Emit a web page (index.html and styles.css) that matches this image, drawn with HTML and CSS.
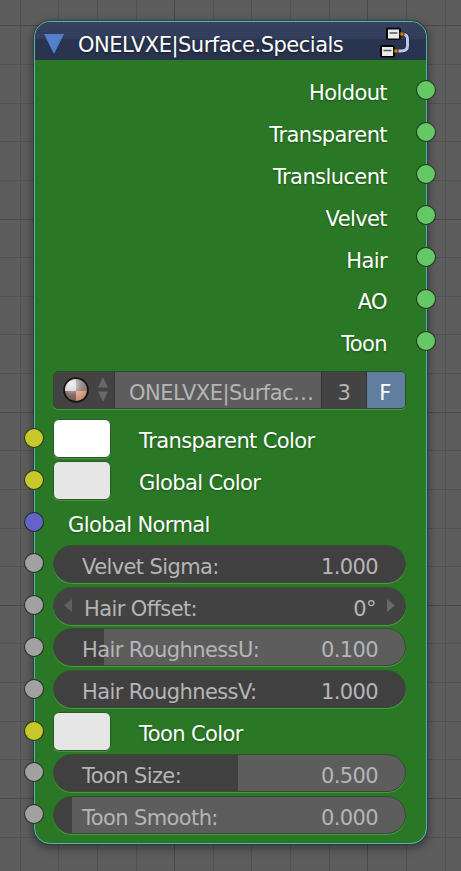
FILE: index.html
```html
<!DOCTYPE html>
<html lang="en">
<head>
<meta charset="utf-8">
<title>Node editor</title>
<link rel="stylesheet" href="styles.css">
</head>
<body>
<svg class="canvas-grid" width="461" height="871" shape-rendering="crispEdges" aria-hidden="true">
  <path class="minor" d="M20.5 0V871M58.5 0V871M97.5 0V871M136.5 0V871M213.5 0V871M251.5 0V871M290.5 0V871M329.5 0V871M406.5 0V871M445.5 0V871M0 64.5H461M0 103.5H461M0 141.5H461M0 180.5H461M0 257.5H461M0 296.5H461M0 334.5H461M0 373.5H461M0 450.5H461M0 489.5H461M0 528.5H461M0 566.5H461M0 643.5H461M0 682.5H461M0 721.5H461M0 759.5H461M0 837.5H461"/>
  <path class="major" d="M174.5 0V871M367.5 0V871M0 25.5H461M0 219.5H461M0 412.5H461M0 605.5H461M0 798.5H461"/>
</svg>
<main class="node">
  <header class="header">
    <svg class="collapse" width="20" height="20" viewBox="0 0 20 20"><path d="M0 0H20L10 20Z" fill="#5280cd"/></svg>
    <h1 class="title">ONELVXE|Surface.Specials</h1>
    <svg class="tree-icon" width="32" height="32" viewBox="0 0 32 32">
      <path d="M18 7H22Q27.500 7 27.500 12V19Q27.500 24 21 24H13" fill="none" stroke="#202a45" stroke-width="4.500"/>
      <path d="M18 7H22Q27.500 7 27.500 12V19Q27.500 24 21 24H13" fill="none" stroke="#b9c8ee" stroke-width="3"/>
      <rect x="6" y="0.500" width="15" height="12.500" rx="2" fill="#080808"/>
      <rect x="0" y="18" width="15" height="12.500" rx="2" fill="#080808"/>
      <rect x="8" y="2.500" width="11" height="9" fill="#eaeaea"/>
      <rect x="2" y="20" width="11" height="9" fill="#eaeaea"/>
      <path d="M9.500 6H17.500M3.500 23.500H11.500" stroke="#555" stroke-width="1.400"/>
      <circle cx="22" cy="7" r="2.200" fill="#c98417" stroke="#4a2b05"/>
      <circle cx="16" cy="24" r="2.200" fill="#c98417" stroke="#4a2b05"/>
    </svg>
  </header>
  <section class="outputs">
    <div class="row out">Holdout<i class="socket green"></i></div>
    <div class="row out">Transparent<i class="socket green"></i></div>
    <div class="row out">Translucent<i class="socket green"></i></div>
    <div class="row out">Velvet<i class="socket green"></i></div>
    <div class="row out">Hair<i class="socket green"></i></div>
    <div class="row out">AO<i class="socket green"></i></div>
    <div class="row out">Toon<i class="socket green"></i></div>
  </section>
  <section class="datablock">
    <div class="browse">
      <svg width="26" height="26" viewBox="0 0 26 26">
        <defs>
          <radialGradient id="gloss" cx=".32" cy=".25" r=".8"><stop offset="0" stop-color="#fff" stop-opacity=".75"/><stop offset=".6" stop-color="#fff" stop-opacity=".1"/><stop offset="1" stop-color="#000" stop-opacity=".15"/></radialGradient>
        </defs>
        <circle cx="13" cy="13" r="12.800" fill="#151212"/>
        <path d="M13 14H2A11 11 0 0 1 13 2Z" fill="#c9c9c9"/>
        <path d="M13 14V2A11 11 0 0 1 24 14Z" fill="#8b7d7b"/>
        <path d="M13 14H24A11 11 0 0 1 13 24Z" fill="#dda184"/>
        <path d="M13 14V24A11 11 0 0 1 2 14Z" fill="#755d5b"/>
        <circle cx="13" cy="13" r="11" fill="url(#gloss)"/>
      </svg>
      <svg class="updown" width="10" height="25" viewBox="0 0 10 25"><path d="M5 0L10 10.500H0ZM0 14.500H10L5 25Z" fill="#686868"/></svg>
    </div>
    <div class="block-name">ONELVXE|Surfac…</div>
    <div class="users">3</div>
    <div class="fake">F</div>
  </section>
  <section class="inputs">
    <div class="row"><i class="socket yellow"></i><span class="swatch white"></span><span class="label">Transparent Color</span></div>
    <div class="row"><i class="socket yellow"></i><span class="swatch"></span><span class="label">Global Color</span></div>
    <div class="row"><i class="socket blue"></i><span class="label plain">Global Normal</span></div>
    <div class="row"><i class="socket grey"></i><div class="field full"><span>Velvet Sigma:</span><span>1.000</span></div></div>
    <div class="row"><i class="socket grey"></i><div class="field number"><svg width="8" height="13" viewBox="0 0 8 13"><path d="M8 0V13L0 6.500Z" fill="#606060"/></svg><span class="number-name">Hair Offset:</span><span>0°</span><svg width="8" height="13" viewBox="0 0 8 13"><path d="M0 0V13L8 6.500Z" fill="#686868"/></svg></div></div>
    <div class="row"><i class="socket grey"></i><div class="field" style="--fill:50px"><span>Hair RoughnessU:</span><span>0.100</span></div></div>
    <div class="row"><i class="socket grey"></i><div class="field full"><span>Hair RoughnessV:</span><span>1.000</span></div></div>
    <div class="row"><i class="socket yellow"></i><span class="swatch"></span><span class="label">Toon Color</span></div>
    <div class="row"><i class="socket grey"></i><div class="field" style="--fill:184px"><span>Toon Size:</span><span>0.500</span></div></div>
    <div class="row"><i class="socket grey"></i><div class="field" style="--fill:18px"><span>Toon Smooth:</span><span>0.000</span></div></div>
  </section>
</main>
</body>
</html>
```
FILE: styles.css
```css
* { box-sizing: border-box; }
body {
  margin: 0;
  width: 461px;
  height: 871px;
  padding: 21px 34px 0;
  overflow: hidden;
  background: #5d5d5d;
  font-family: "DejaVu Sans", sans-serif;
  font-size: 21px;
  letter-spacing: -.6px;
  line-height: 24px;
  color: #fff;
}
.canvas-grid { position: absolute; left: 0; top: 0; z-index: -1; }
.minor { stroke: #525252; }
.major { stroke: #494949; }
.node {
  position: relative;
  width: 393px;
  height: 823px;
  border: 1px solid #55b3b4;
  border-radius: 16px;
  background: rgba(41, 121, 35, .96);
  box-shadow: 0 0 0 1px rgba(20, 45, 50, .35), 0 3px 9px 2px rgba(0, 0, 0, .35);
}
.header {
  display: flex;
  align-items: flex-start;
  height: 38px;
  padding: 12px 14px 0 9px;
  border-radius: 15px 15px 0 0;
  background: linear-gradient(#36415f 0, #323d5b 45%, #29354f 46%, #28344f 100%);
  border-bottom: 1px solid #263b3a;
}
.collapse { flex: none; }
.title {
  margin: -1px 0 0 14px;
  font-size: 21px;
  font-weight: normal;
  letter-spacing: -.5px;
  white-space: nowrap;
  flex: 1;
  text-shadow: 0 1px 2px rgba(0, 0, 0, .5);
}
.tree-icon { flex: none; margin-top: -7px; }
.outputs { padding-top: 9px; }
.row { position: relative; display: flex; align-items: center; height: 41.82px; }
.out { justify-content: flex-end; padding: 7px 39px 0 0; }
.out, .label { text-shadow: 0 1px 2px rgba(0, 0, 0, .3); }
.socket {
  position: absolute;
  left: -11px;
  top: 11px;
  width: 20px;
  height: 20px;
  border: 1px solid rgba(20, 32, 20, .85);
  border-radius: 50%;
}
.out .socket { left: auto; right: -9.5px; }
.green { background: #64c864; }
.yellow { background: #c8c72b; }
.blue { background: #6464c8; }
.grey { background: #a1a1a1; }
.datablock {
  display: flex;
  width: 353px;
  height: 38px;
  margin: 9.3px 0 0 18px;
  border: 1px solid #304a2d;
  border-radius: 5px;
  overflow: hidden;
  box-shadow: 0 1px 0 rgba(120, 180, 115, .5);
  color: #b5b5b5;
}
.browse {
  display: flex;
  align-items: center;
  width: 61px;
  padding-left: 9px;
  background: #434343;
  border-right: 1px solid #383838;
}
.updown { margin-left: 9px; }
.block-name { width: 206px; padding: 9px 0 0 14px; background: #5d5d5d; white-space: nowrap; letter-spacing: -.5px; }
.users { width: 46px; padding-top: 9px; text-align: center; background: #434343; border: solid #333; border-width: 0 1px; }
.fake { flex: 1; padding: 9px 2px 0 0; text-align: center; color: #fff; background: #607f9f; }
.inputs { padding-top: 8px; }
.swatch {
  width: 58px;
  height: 39px;
  margin: 1px 0 0 18px;
  border: 1px solid #275a25;
  border-radius: 6px;
  background: #e6e6e6;
  box-shadow: 0 1px 0 rgba(120, 180, 115, .4);
}
.white { background: #fff; }
.label { padding: 6px 0 0 28px; }
.plain { padding-left: 33px; }
.field {
  --fill: 0px;
  display: flex;
  align-items: center;
  justify-content: space-between;
  width: 353px;
  height: 38px;
  margin: 1px 0 0 18px;
  padding: 6px 27px 0 28px;
  border: 1px solid #35502f;
  border-radius: 19px;
  background: linear-gradient(to right, #404040 var(--fill), #5d5d5d var(--fill));
  box-shadow: 0 1px 0 rgba(120, 180, 115, .5);
  color: #b5b5b5;
}
.full { background: #404040; }
.number { padding: 6px 10px 0 10px; background: #434343; }
.number svg { margin-top: -6px; }
.number-name { flex: 1; margin-left: 12px; }
.number span + svg { margin-left: 11px; }
```
